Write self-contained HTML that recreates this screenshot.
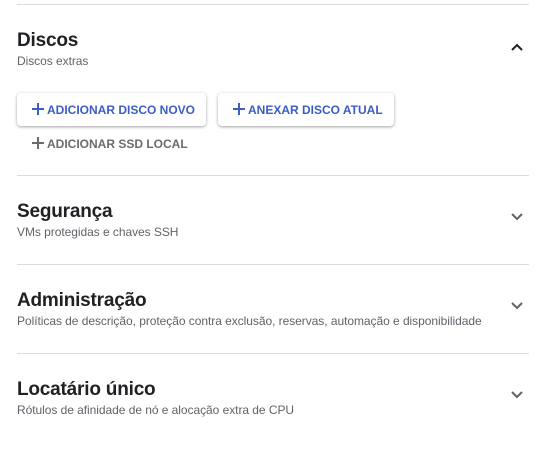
<!DOCTYPE html>
<html><head><meta charset="utf-8"><style>
body{margin:0;width:560px;height:449px;background:#fff;font-family:"Liberation Sans",sans-serif;position:relative;overflow:hidden}
.hr{position:absolute;left:17px;width:512px;height:1px;background:#dadce0}
.t{position:absolute;left:17px;font-size:19px;font-weight:bold;color:#202124;line-height:22px;letter-spacing:-0.2px}
.s{position:absolute;left:17px;font-size:12px;color:#5f6368;line-height:14px;letter-spacing:-0.05px}
.btn{position:absolute;top:93px;height:33px;border-radius:4px;background:#fff;box-shadow:0 1px 3px rgba(60,64,67,.35),0 1px 2px rgba(60,64,67,.15);color:#3b5dc4;font-size:12px;font-weight:bold;line-height:35px;box-sizing:border-box;white-space:nowrap}
.pl{display:inline-block;width:14px;height:14px;vertical-align:-2px;margin-right:2px}
.ch{position:absolute;left:510px}
</style></head><body>
<div class="hr" style="top:4px"></div>
<div class="t" style="top:30px">Discos</div>
<div class="s" style="top:54px">Discos extras</div>
<svg class="ch" style="top:40px" width="14" height="14" viewBox="0 0 14 14"><path d="M2 10 L7 5 L12 10" fill="none" stroke="#202124" stroke-width="2"/></svg>
<div class="btn" style="left:17px;width:189px;padding-left:14px"><svg class="pl" viewBox="0 0 14 14"><path d="M7 1V13M1 7H13" stroke="#3b5dc4" stroke-width="2"/></svg>ADICIONAR DISCO NOVO</div>
<div class="btn" style="left:218px;width:176px;padding-left:14px"><svg class="pl" viewBox="0 0 14 14"><path d="M7 1V13M1 7H13" stroke="#3b5dc4" stroke-width="2"/></svg>ANEXAR DISCO ATUAL</div>
<div style="position:absolute;left:31px;top:134px;line-height:20px;color:#6b6b6b;font-size:12px;font-weight:bold;white-space:nowrap"><svg class="pl" viewBox="0 0 14 14"><path d="M7 1V13M1 7H13" stroke="#6b6b6b" stroke-width="2"/></svg>ADICIONAR SSD LOCAL</div>
<div class="hr" style="top:175px"></div>
<div class="t" style="top:201px">Segurança</div>
<div class="s" style="top:225px">VMs protegidas e chaves SSH</div>
<svg class="ch" style="top:210px" width="14" height="14" viewBox="0 0 14 14"><path d="M2 4 L7 9 L12 4" fill="none" stroke="#5f6368" stroke-width="2"/></svg>
<div class="hr" style="top:264px"></div>
<div class="t" style="top:290px">Administração</div>
<div class="s" style="top:314px">Políticas de descrição, proteção contra exclusão, reservas, automação e disponibilidade</div>
<svg class="ch" style="top:299px" width="14" height="14" viewBox="0 0 14 14"><path d="M2 4 L7 9 L12 4" fill="none" stroke="#5f6368" stroke-width="2"/></svg>
<div class="hr" style="top:353px"></div>
<div class="t" style="top:379px">Locatário único</div>
<div class="s" style="top:403px">Rótulos de afinidade de nó e alocação extra de CPU</div>
<svg class="ch" style="top:388px" width="14" height="14" viewBox="0 0 14 14"><path d="M2 4 L7 9 L12 4" fill="none" stroke="#5f6368" stroke-width="2"/></svg>
</body></html>
